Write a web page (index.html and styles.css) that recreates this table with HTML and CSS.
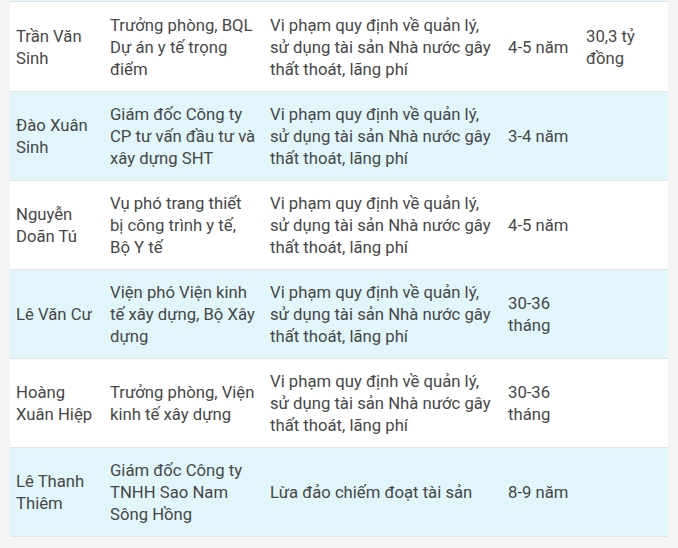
FILE: index.html
```
<!DOCTYPE html>
<html lang="vi">
<head>
<meta charset="utf-8">
<link rel="stylesheet" href="styles.css">
</head>
<body>
<div class="wrap">
  <div class="prev"></div>
  <table class="tbl">
    <colgroup>
      <col class="c1"><col class="c2"><col class="c3"><col class="c4"><col class="c5">
    </colgroup>
    <tr class="odd">
      <td>Trần Văn Sinh</td>
      <td>Trưởng phòng, BQL Dự án y tế trọng điểm</td>
      <td>Vi phạm quy định về quản lý, sử dụng tài sản Nhà nước gây thất thoát, lãng phí</td>
      <td>4-5 năm</td>
      <td>30,3 tỷ đồng</td>
    </tr>
    <tr class="even">
      <td>Đào Xuân Sinh</td>
      <td>Giám đốc Công ty CP tư vấn đầu tư và xây dựng SHT</td>
      <td>Vi phạm quy định về quản lý, sử dụng tài sản Nhà nước gây thất thoát, lãng phí</td>
      <td>3-4 năm</td>
      <td></td>
    </tr>
    <tr class="odd">
      <td>Nguyễn Doãn Tú</td>
      <td>Vụ phó trang thiết bị công trình y tế, Bộ Y tế</td>
      <td>Vi phạm quy định về quản lý, sử dụng tài sản Nhà nước gây thất thoát, lãng phí</td>
      <td>4-5 năm</td>
      <td></td>
    </tr>
    <tr class="even">
      <td>Lê Văn Cư</td>
      <td>Viện phó Viện kinh tế xây dựng, Bộ Xây dựng</td>
      <td>Vi phạm quy định về quản lý, sử dụng tài sản Nhà nước gây thất thoát, lãng phí</td>
      <td>30-36 tháng</td>
      <td></td>
    </tr>
    <tr class="odd">
      <td>Hoàng Xuân Hiệp</td>
      <td>Trưởng phòng, Viện kinh tế xây dựng</td>
      <td>Vi phạm quy định về quản lý, sử dụng tài sản Nhà nước gây thất thoát, lãng phí</td>
      <td>30-36 tháng</td>
      <td></td>
    </tr>
    <tr class="even">
      <td>Lê Thanh Thiêm</td>
      <td>Giám đốc Công ty TNHH Sao Nam Sông Hồng</td>
      <td>Lừa đảo chiếm đoạt tài sản</td>
      <td>8-9 năm</td>
      <td></td>
    </tr>
  </table>
</div>
</body>
</html>
```
FILE: styles.css
```
html, body {
  margin: 0;
  padding: 0;
  background: #f4f4f4;
}
body {
  font-family: Roboto, "Noto Sans", sans-serif;
  color: #474747;
}
.wrap {
  width: 658px;
  margin-left: 10px;
}
.prev {
  height: 1px;
  background: #e1f5fb;
  border-bottom: 1px solid #dde3e6;
}
.tbl {
  width: 658px;
  border-collapse: collapse;
  table-layout: fixed;
  font-size: 16.7px;
  line-height: 22px;
}
.c1 { width: 94px; }
.c2 { width: 160px; }
.c3 { width: 238px; }
.c4 { width: 78px; }
.c5 { width: 88px; }
.tbl td {
  height: 89px;
  box-sizing: border-box;
  padding: 3px 6px 0;
  vertical-align: middle;
  border-bottom: 1px solid #dde3e6;
}
.odd td { background: #ffffff; }
.even td { background: #e1f5fb; }
```
